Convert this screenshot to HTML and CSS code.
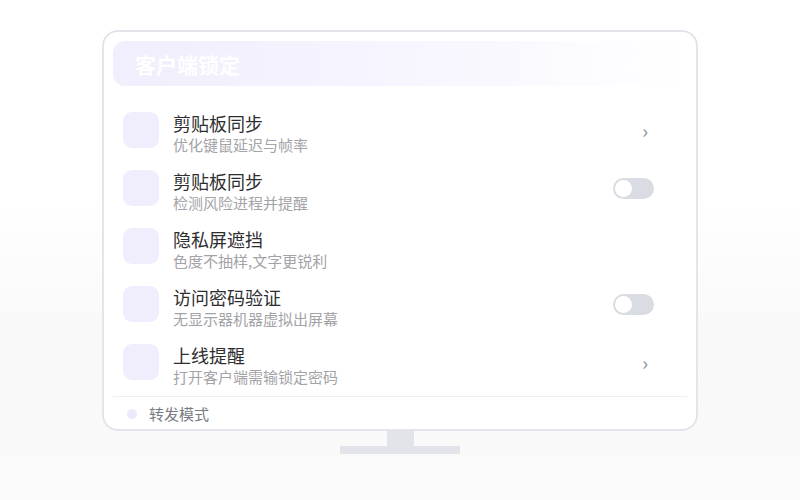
FILE: index.html
```html
<!DOCTYPE html>
<html lang="zh">
<head>
<meta charset="utf-8">
<link rel="stylesheet" href="styles.css">
</head>
<body>
<div class="stage">
  <div class="monitor">
    <div class="header">
      <span class="header-title">客户端锁定</span>
      <span class="header-extra">已开启</span>
    </div>
    <div class="list">
      <div class="row">
        <div class="icon"></div>
        <div class="texts"><div class="title">剪贴板同步</div><div class="sub">优化键鼠延迟与帧率</div></div>
        <span class="chev">›</span>
      </div>
      <div class="row">
        <div class="icon"></div>
        <div class="texts"><div class="title">剪贴板同步</div><div class="sub">检测风险进程并提醒</div></div>
        <span class="toggle"><span class="knob"></span></span>
      </div>
      <div class="row">
        <div class="icon"></div>
        <div class="texts"><div class="title">隐私屏遮挡</div><div class="sub">色度不抽样,文字更锐利</div></div>
      </div>
      <div class="row">
        <div class="icon"></div>
        <div class="texts"><div class="title">访问密码验证</div><div class="sub">无显示器机器虚拟出屏幕</div></div>
        <span class="toggle"><span class="knob"></span></span>
      </div>
      <div class="row">
        <div class="icon"></div>
        <div class="texts"><div class="title">上线提醒</div><div class="sub">打开客户端需输锁定密码</div></div>
        <span class="chev">›</span>
      </div>
    </div>
    <div class="footer">
      <span class="dot"></span>
      <span class="footer-text">转发模式</span>
    </div>
  </div>
  <div class="neck"></div>
  <div class="base"></div>
</div>
</body>
</html>
```

FILE: styles.css
```css
* { box-sizing: border-box; }
html, body { margin: 0; padding: 0; }
body {
  width: 800px;
  height: 500px;
  overflow: hidden;
  background: linear-gradient(180deg, #ffffff 0px, #ffffff 200px, #f9f9fa 330px, #fafafb 500px);
  font-family: "Noto Sans CJK SC", "Noto Sans", sans-serif;
}
.stage {
  display: flex;
  flex-direction: column;
  align-items: center;
  padding-top: 30px;
}
.monitor {
  width: 596px;
  height: 401px;
  border: 2px solid #e3e5ea;
  border-radius: 16px;
  background: #fff;
  padding: 9px 9px 0 9px;
  display: flex;
  flex-direction: column;
  overflow: hidden;
}
.header {
  height: 45px;
  flex: none;
  border-radius: 12px;
  background: linear-gradient(90deg, #f1eefd 0%, #f6f4fe 45%, #fcfbff 82%, #ffffff 100%);
  display: flex;
  align-items: center;
  justify-content: space-between;
  padding: 0 30px 0 22px;
}
.header-title {
  color: #ffffff;
  font-size: 21px;
  font-weight: 700;
}
.header-extra {
  color: #ffffff;
  font-size: 14px;
}
.list {
  margin-top: 15px;
  display: flex;
  flex-direction: column;
  flex: none;
}
.row {
  height: 58px;
  display: flex;
  align-items: center;
  padding: 0 33px 0 10px;
}
.icon {
  width: 36px;
  height: 36px;
  border-radius: 9px;
  background: #f0edfc;
  flex: none;
}
.texts {
  margin-left: 14px;
  margin-top: 6px;
  flex: 1;
  display: flex;
  flex-direction: column;
}
.title {
  font-size: 18px;
  line-height: 24px;
  color: #2e2e30;
}
.sub {
  font-size: 15px;
  line-height: 20px;
  color: #a3a3a8;
}
.chev {
  font-size: 19px;
  color: #8c8f99;
  margin-right: 6px;
  line-height: 20px;
}
.toggle {
  width: 41px;
  height: 21px;
  border-radius: 11px;
  background: #d9dce3;
  padding: 2px;
  display: flex;
  align-items: center;
}
.knob {
  width: 17px;
  height: 17px;
  border-radius: 50%;
  background: #fff;
}
.footer {
  margin-top: 5px;
  border-top: 1px solid #eceef1;
  height: 34px;
  flex: none;
  display: flex;
  align-items: center;
  padding-left: 14px;
}
.dot {
  width: 10px;
  height: 10px;
  border-radius: 50%;
  background: #ece9fb;
}
.footer-text {
  margin-left: 12px;
  font-size: 15px;
  color: #777b82;
}
.neck {
  width: 27px;
  height: 15px;
  background: #e2e4e9;
}
.base {
  width: 120px;
  height: 8px;
  background: #e2e4e9;
}
```
